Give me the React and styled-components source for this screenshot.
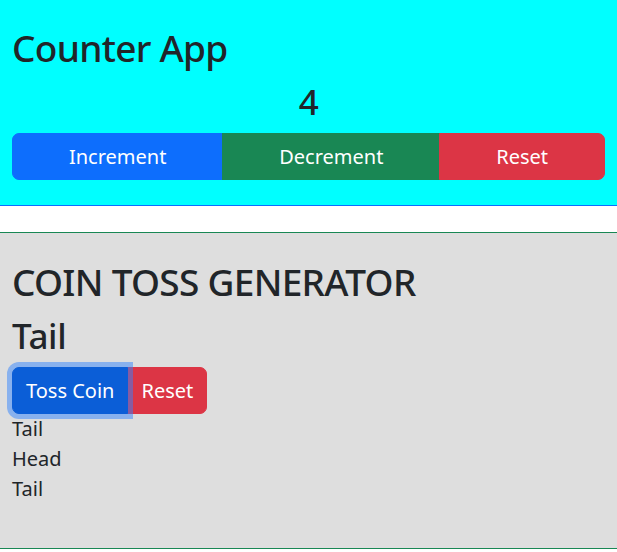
import { styled, createGlobalStyle } from "styled-components";

const COLORS = {
  text: "#212529",
  cyan: "#00ffff",
  gray: "#dedede",
  primary: "#0d6efd",
  primaryActive: "#0b5ed7",
  success: "#198754",
  danger: "#dc3545",
};

const GlobalStyle = createGlobalStyle`
  * { box-sizing: border-box; }
  body {
    margin: 0;
    background: #fff;
    color: ${COLORS.text};
    font-family: "Noto Sans", "Open Sans", sans-serif;
    font-size: 20px;
    line-height: 30px;
  }
`;

const App = () => {
  const tosses = ["Tail", "Head", "Tail"];

  return (
    <>
      <GlobalStyle />
      <CounterCard>
        <Title>Counter App</Title>
        <Count>4</Count>
        <ButtonGroup $stretch>
          <Button $bg={COLORS.primary}>Increment</Button>
          <Button $bg={COLORS.success}>Decrement</Button>
          <Button $bg={COLORS.danger}>Reset</Button>
        </ButtonGroup>
      </CounterCard>

      <CoinCard>
        <Title>COIN TOSS GENERATOR</Title>
        <Result>Tail</Result>
        <ButtonGroup>
          <Button $bg={COLORS.primaryActive} $focused>
            Toss Coin
          </Button>
          <Button $bg={COLORS.danger}>Reset</Button>
        </ButtonGroup>
        <TossList>
          {tosses.map((t, i) => (
            <TossItem key={i}>{t}</TossItem>
          ))}
        </TossList>
      </CoinCard>
    </>
  );
};

export default App;

const CounterCard = styled.section`
  background-color: ${COLORS.cyan};
  padding: 24px 12px 25px;
  border-bottom: 1px solid ${COLORS.primary};
`;

const CoinCard = styled.section`
  margin-top: 26px;
  background-color: ${COLORS.gray};
  padding: 25px 12px 24px;
  border-top: 1px solid ${COLORS.success};
  border-bottom: 1px solid ${COLORS.success};
`;

const Title = styled.h1`
  margin: 0 0 10px;
  font-size: 37px;
  line-height: 47px;
  font-weight: 500;
  letter-spacing: -0.7px;
`;

const Result = styled.h2`
  margin: 0 0 10px;
  font-size: 35px;
  line-height: 42px;
  font-weight: 500;
  letter-spacing: -0.4px;
`;

const Count = styled(Result)`
  text-align: center;
`;

const ButtonGroup = styled.div`
  display: ${(p) => (p.$stretch ? "flex" : "inline-flex")};
  vertical-align: top;

  & > button {
    flex: ${(p) => (p.$stretch ? "1 1 auto" : "0 0 auto")};
  }
  & > button:not(:first-child) {
    margin-left: -1px;
    border-top-left-radius: 0;
    border-bottom-left-radius: 0;
  }
  & > button:not(:last-child) {
    border-top-right-radius: 0;
    border-bottom-right-radius: 0;
  }
`;

const Button = styled.button`
  position: relative;
  z-index: ${(p) => (p.$focused ? 1 : 0)};
  padding: 7.5px 13px;
  font-family: inherit;
  font-size: 20px;
  line-height: 30px;
  font-weight: 400;
  color: #fff;
  background-color: ${(p) => p.$bg};
  border: 1px solid ${(p) => p.$bg};
  border-radius: 7px;
  cursor: pointer;
  box-shadow: ${(p) =>
    p.$focused ? "0 0 0 5px rgba(49, 132, 253, 0.5)" : "none"};
`;

const TossList = styled.ul`
  list-style: none;
  margin: 0 0 20px;
  padding: 0;
`;

const TossItem = styled.li`
  font-size: 20px;
  line-height: 30px;
`;
